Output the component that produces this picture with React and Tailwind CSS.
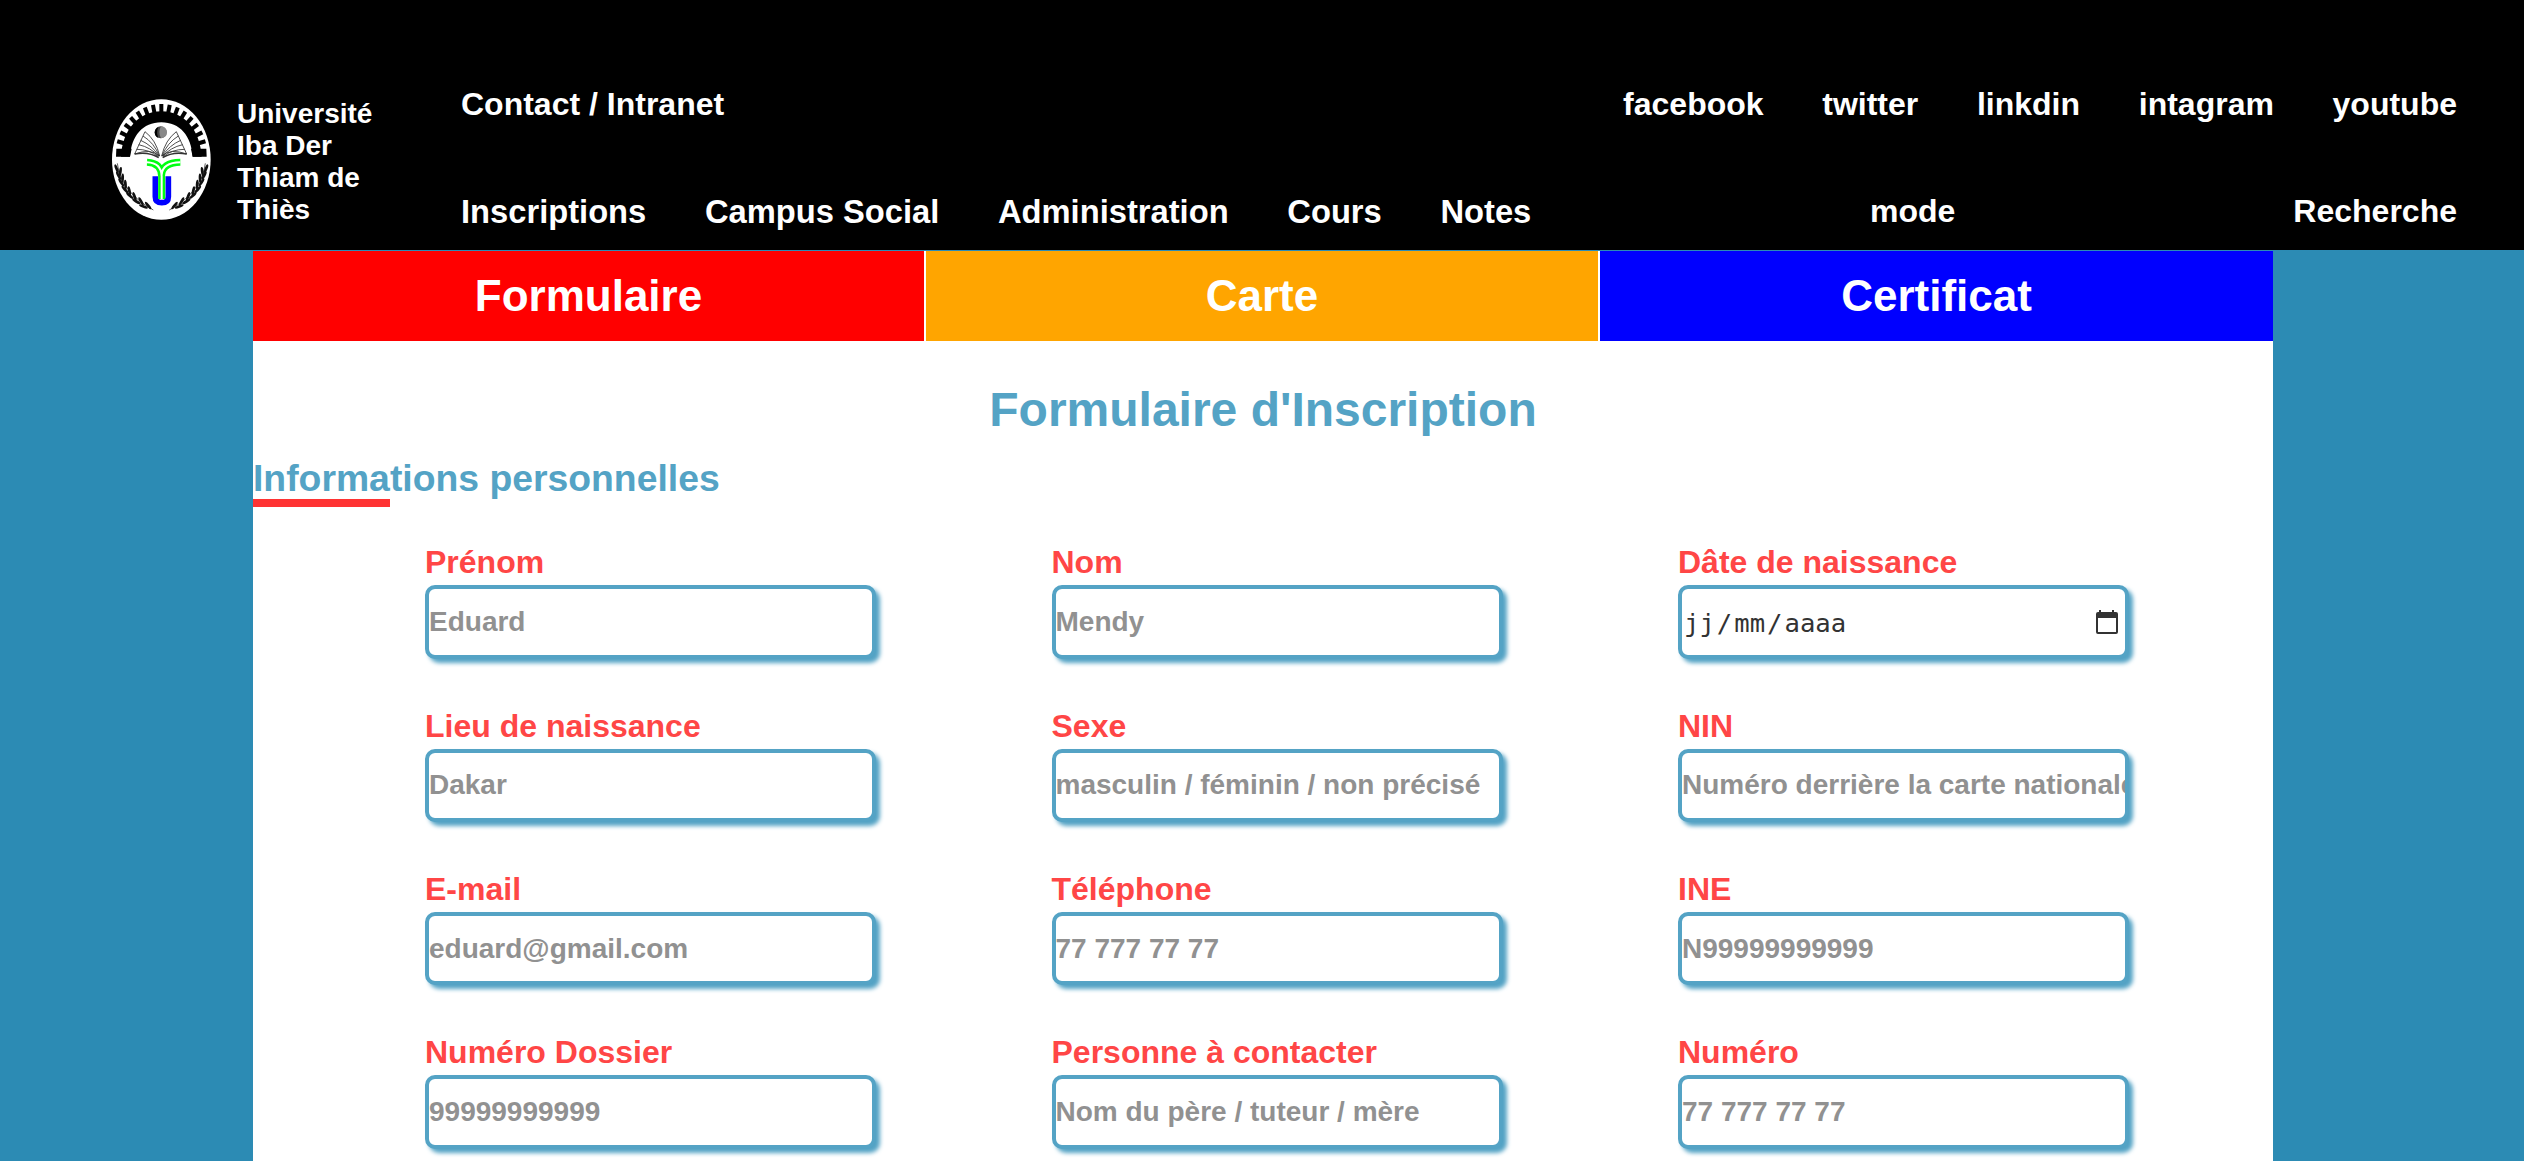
const social = ['facebook', 'twitter', 'linkdin', 'intagram', 'youtube']
const nav = ['Inscriptions', 'Campus Social', 'Administration', 'Cours', 'Notes']
const fields = [
  ['Prénom', 'Eduard'],
  ['Nom', 'Mendy'],
  ['Dâte de naissance', null],
  ['Lieu de naissance', 'Dakar'],
  ['Sexe', 'masculin / féminin / non précisé'],
  ['NIN', 'Numéro derrière la carte nationale'],
  ['E-mail', 'eduard@gmail.com'],
  ['Téléphone', '77 777 77 77'],
  ['INE', 'N99999999999'],
  ['Numéro Dossier', '99999999999'],
  ['Personne à contacter', 'Nom du père / tuteur / mère'],
  ['Numéro', '77 777 77 77'],
]

const teeth = [-73.5, -63, -52.5, -42, -31.5, -21, -10.5, 0, 10.5, 21, 31.5, 42, 52.5, 63, 73.5]
const leaves = [
  [86, 268, 74], [92, 288, 68], [100, 308, 62], [111, 328, 54], [126, 346, 46], [145, 362, 36], [166, 376, 26],
]

function Branch() {
  return (
    <g>
      <path d="M82 250 Q92 335 190 390" fill="none" stroke="#111" strokeWidth="2" />
      {leaves.map(([x, y, r]) => (
        <g key={y} transform={`translate(${x} ${y})`} fill="#111">
          <ellipse cx="-4" cy="5" rx="14" ry="4.2" transform={`rotate(${r - 6})`} />
          <ellipse cx="6" cy="-6" rx="14" ry="4.2" transform={`rotate(${r + 24})`} />
        </g>
      ))}
    </g>
  )
}

function Logo() {
  return (
    <svg viewBox="66 57 297 363" className="h-[121px] w-[99px] shrink-0">
      <ellipse cx="214" cy="238.5" rx="148" ry="181" fill="#fff" />
      <path d="M93 230 C97 150 146 94 214 94 C282 94 331 150 335 230 H308 C304 168 270 127 214 127 C158 127 124 168 120 230 Z" fill="#000" />
      <path d="M79 206 H125 L120 230 H78 Z M349 206 H303 L308 230 H350 Z" fill="#000" />
      {teeth.map((a) => {
        const t = (a * Math.PI) / 180
        const x = 214 + 128 * Math.sin(t)
        const y = 228 - 146 * Math.cos(t)
        return <rect key={a} x="-6" y="-10" width="12" height="24" fill="#000" transform={`translate(${x} ${y}) rotate(${a})`} />
      })}
      <circle cx="212" cy="157" r="18" fill="#444" />
      <path d="M213 139 A18 18 0 0 1 213 175 Q203 157 213 139Z" fill="#888" />
      <path d="M205 141 A18 18 0 0 0 205 174 Q198 158 205 141Z" fill="#000" />
      <g fill="none" stroke="#333" strokeWidth="2.6">
        {[1, -1].map((s) => (
          <g key={s} transform={s === -1 ? 'translate(424 0) scale(-1 1)' : undefined}>
            <path d="M165 155 Q198 180 209 228 Q182 204 134 222 Z" />
            <path d="M159 168 Q192 188 208 228" />
            <path d="M152 181 Q186 196 207 228" />
            <path d="M146 194 Q182 202 206 229" />
            <path d="M140 208 Q178 208 205 230" />
            <path d="M134 222 Q176 214 206 233" strokeWidth="4" />
          </g>
        ))}
      </g>
      <path d="M196 289 V350 Q196 368 215.5 368 Q235 368 235 350 V289" fill="none" stroke="#00f" strokeWidth="17" />
      <path d="M215 357 V289 Q214 249 171 247 M215 284 Q218 248 271 247" fill="none" stroke="#0f1" strokeWidth="21" />
      <path d="M215 357 V289 Q214 249 171 247 M215 284 Q218 248 271 247" fill="none" stroke="#fff" strokeWidth="6" />
      <Branch />
      <g transform="translate(428 0) scale(-1 1)">
        <Branch />
      </g>
    </svg>
  )
}

function DateInput() {
  return (
    <div className="flex h-[73.3px] items-center justify-between rounded-[10px] border-4 border-[#54a3c5] bg-white pr-[6px] shadow-[4px_4px_4px_#54a3c5]">
      <div className="flex pt-[2px] font-['DejaVu_Sans_Mono',monospace] text-[25.6px] font-normal leading-[32px] text-[#333]">
        <span className="px-[2px]">jj</span>
        <span>/</span>
        <span className="px-[2px]">mm</span>
        <span>/</span>
        <span className="px-[2px]">aaaa</span>
      </div>
      <svg viewBox="0 0 24 26" className="-mt-[1px] h-[26px] w-[24px]">
        <path d="M5 1V4M18 1V4" stroke="#333" strokeWidth="2" />
        <path fillRule="evenodd" d="M3 3H21Q23 3 23 5V23Q23 25 21 25H3Q1 25 1 23V5Q1 3 3 3ZM3 9V23H21V9Z" fill="#333" />
      </svg>
    </div>
  )
}

export default function App() {
  return (
    <div className="h-[1161px] w-[2524px] overflow-hidden bg-[#2c8bb4] font-['Liberation_Sans',Arial,sans-serif] font-bold">
      <header className="flex h-[250px] bg-black text-[32px] leading-[37px] text-white">
        <div className="flex w-[461px] pl-[112px] pt-[98px]">
          <div className="pt-[1px]">
            <Logo />
          </div>
          <p className="ml-[26px] w-[150px] text-[28px] leading-[32px]">Université Iba Der Thiam de Thiès</p>
        </div>
        <div className="flex flex-1 flex-col pr-[67px] pt-[86px]">
          <div className="flex justify-between">
            <span>Contact / Intranet</span>
            <div className="flex gap-[58.7px]">
              {social.map((s) => <span key={s}>{s}</span>)}
            </div>
          </div>
          <div className="mt-[70px] flex justify-between">
            <nav className="flex gap-[58.7px] text-[32.7px]">
              {nav.map((s) => <span key={s}>{s}</span>)}
            </nav>
            <div className="flex w-[587px] justify-between">
              <span>mode</span>
              <span>Recherche</span>
            </div>
          </div>
        </div>
      </header>
      <main className="ml-[253px] mt-px h-[910px] w-[2020px] bg-white">
        <div className="grid h-[90px] grid-cols-[671px_672px_673px] gap-[2px] text-[44px] text-white">
          <div className="flex items-center justify-center bg-[#ff0000]">Formulaire</div>
          <div className="flex items-center justify-center bg-[#ffa500]">Carte</div>
          <div className="flex items-center justify-center bg-[#0000ff]">Certificat</div>
        </div>
        <h1 className="pt-[41px] text-center text-[48px] leading-[55px] text-[#54a3c5]">Formulaire d'Inscription</h1>
        <h2 className="mt-[20px] text-[37.33px] leading-[43px] text-[#54a3c5]">Informations personnelles</h2>
        <div className="-mt-[1px] h-[8px] w-[137px] bg-[#ff3333]" />
        <form className="ml-[172px] mt-[37.4px] grid w-[1704px] grid-cols-3 gap-x-[175.5px] gap-y-[49px]">
          {fields.map(([label, placeholder]) => (
            <div key={label}>
              <label className="mb-[4px] block text-[32px] leading-[37px] text-[#ff4646]">{label}</label>
              {placeholder === null ? (
                <DateInput />
              ) : (
                <input
                  placeholder={placeholder}
                  className="block h-[73.3px] w-full rounded-[10px] border-4 border-[#54a3c5] bg-white p-0 text-[28px] shadow-[4px_4px_4px_#54a3c5] placeholder:text-[#919191] placeholder:opacity-100"
                />
              )}
            </div>
          ))}
        </form>
      </main>
    </div>
  )
}
